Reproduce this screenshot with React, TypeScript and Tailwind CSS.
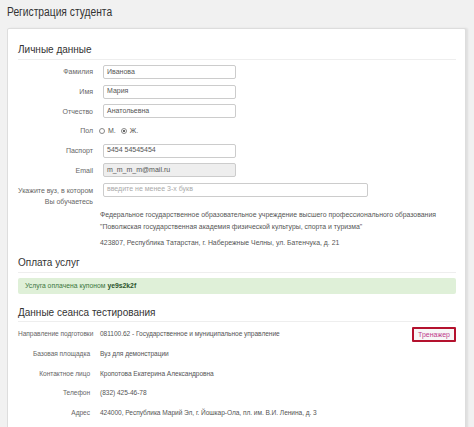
const Field = ({ label, children }: { label: React.ReactNode; children: React.ReactNode }) => (
  <div className="flex items-center h-[19.7px]">
    <div className="w-[75px] text-right text-[7px] leading-[11px] text-[#666] whitespace-nowrap">{label}</div>
    <div className="ml-[10px] flex items-center">{children}</div>
  </div>
);

const Input = ({ value, w = "w-[133px]", gray = false, placeholder = false }: { value: string; w?: string; gray?: boolean; placeholder?: boolean }) => (
  <div
    className={`${w} h-[14px] border border-[#ccc] rounded-[2px] pl-[3px] flex items-center text-[7px] ${
      gray ? "bg-[#eee]" : "bg-white"
    } ${placeholder ? "text-[#aaa]" : "text-[#555]"}`}
  >
    {value}
  </div>
);

const Info = ({ label, value }: { label: string; value: string }) => (
  <div className="flex items-center h-[19.6px] text-[6.6px] tracking-[-0.05px] text-[#555] whitespace-nowrap">
    <div className="w-[72px] text-right text-[#666]">{label}</div>
    <div className="ml-[10px]">{value}</div>
  </div>
);

const Radio = ({ checked }: { checked?: boolean }) => (
  <span className="inline-flex w-[6px] h-[6px] rounded-full border border-[#888] bg-white items-center justify-center mr-[3px]">
    {checked && <span className="w-[2px] h-[2px] rounded-full bg-[#333]" />}
  </span>
);

const Heading = ({ children, className = "" }: { children: React.ReactNode; className?: string }) => (
  <div className={`text-[10px] leading-[14px] text-[#333] border-b border-[#eee] ${className}`}>{children}</div>
);

const App = () => {
  return (
    <div
      className="w-[474px] h-[427px] overflow-hidden bg-[#f1f1f1]"
      style={{ fontFamily: '"Liberation Sans", Arial, sans-serif' }}
    >
      <div className="h-[28px] pl-[7px] pt-[4px] flex items-start">
        <div className="origin-left scale-x-[0.82] text-[12.5px] leading-[16px] text-[#333] whitespace-nowrap">
          Регистрация студента
        </div>
      </div>
      <div className="ml-[7px] w-[459px] h-[420px] bg-white border border-[#ddd] rounded-[2px] shadow-[2px_0_2px_rgba(0,0,0,0.08)] pl-[10px] pr-[9px] pt-[14px]">
        <Heading className="pb-[2px]">Личные данные</Heading>
        <div className="pt-[2px]">
          <Field label="Фамилия">
            <Input value="Иванова" />
          </Field>
          <Field label="Имя">
            <Input value="Мария" />
          </Field>
          <Field label="Отчество">
            <Input value="Анатольевна" />
          </Field>
          <Field label="Пол">
            <div className="-ml-[4px] flex items-center text-[7px] text-[#555]">
              <Radio />
              <span className="mr-[5px]">М.</span>
              <Radio checked />
              <span>Ж.</span>
            </div>
          </Field>
          <Field label="Паспорт">
            <Input value="5454 54545454" />
          </Field>
          <Field label="Email">
            <Input value="m_m_m_m@mail.ru" gray />
          </Field>
          <div className="flex items-start mt-[2.5px]">
            <div className="w-[75px] text-right text-[7px] leading-[11px] text-[#666] pt-[2px] whitespace-nowrap">
              Укажите вуз, в котором
              <br />
              Вы обучаетесь
            </div>
            <div className="ml-[10px]">
              <Input value="введите не менее 3-х букв" w="w-[265px]" placeholder />
            </div>
          </div>
          <div className="ml-[82px] mt-[2.5px] text-[6.9px] leading-[12px] text-[#555] whitespace-nowrap">
            <div>Федеральное государственное образовательное учреждение высшего профессионального образования</div>
            <div>"Поволжская государственная академия физической культуры, спорта и туризма"</div>
            <div className="mt-[4px]">423807, Республика Татарстан, г. Набережные Челны, ул. Батенчука, д. 21</div>
          </div>
        </div>

        <Heading className="mt-[7px] pb-[2px]">Оплата услуг</Heading>
        <div className="mt-[5px] h-[16px] bg-[#dff0d8] rounded-[2px] pl-[7px] flex items-center text-[6.8px] text-[#3c763d]">
          Услуга оплачена купоном&nbsp;<b className="text-[#2b542c]">ye9s2k2f</b>
        </div>

        <Heading className="mt-[12px] pb-[1px]">Данные сеанса тестирования</Heading>
        <div className="pt-[2.5px]">
          <div className="flex items-center justify-between">
            <Info label="Направление подготовки" value="081100.62 - Государственное и муниципальное управление" />
            <button className="w-[44px] h-[15px] border-2 border-[#b4122e] bg-[#f7f7f7] text-[7px] text-[#c03a8a] rounded-[1px] leading-none">
              Тренажер
            </button>
          </div>
          <Info label="Базовая площадка" value="Вуз для демонстрации" />
          <Info label="Контактное лицо" value="Кропотова Екатерина Александровна" />
          <Info label="Телефон" value="(832) 425-46-78" />
          <Info label="Адрес" value="424000, Республика Марий Эл, г. Йошкар-Ола, пл. им. В.И. Ленина, д. 3" />
        </div>
      </div>
    </div>
  );
};

export default App;
